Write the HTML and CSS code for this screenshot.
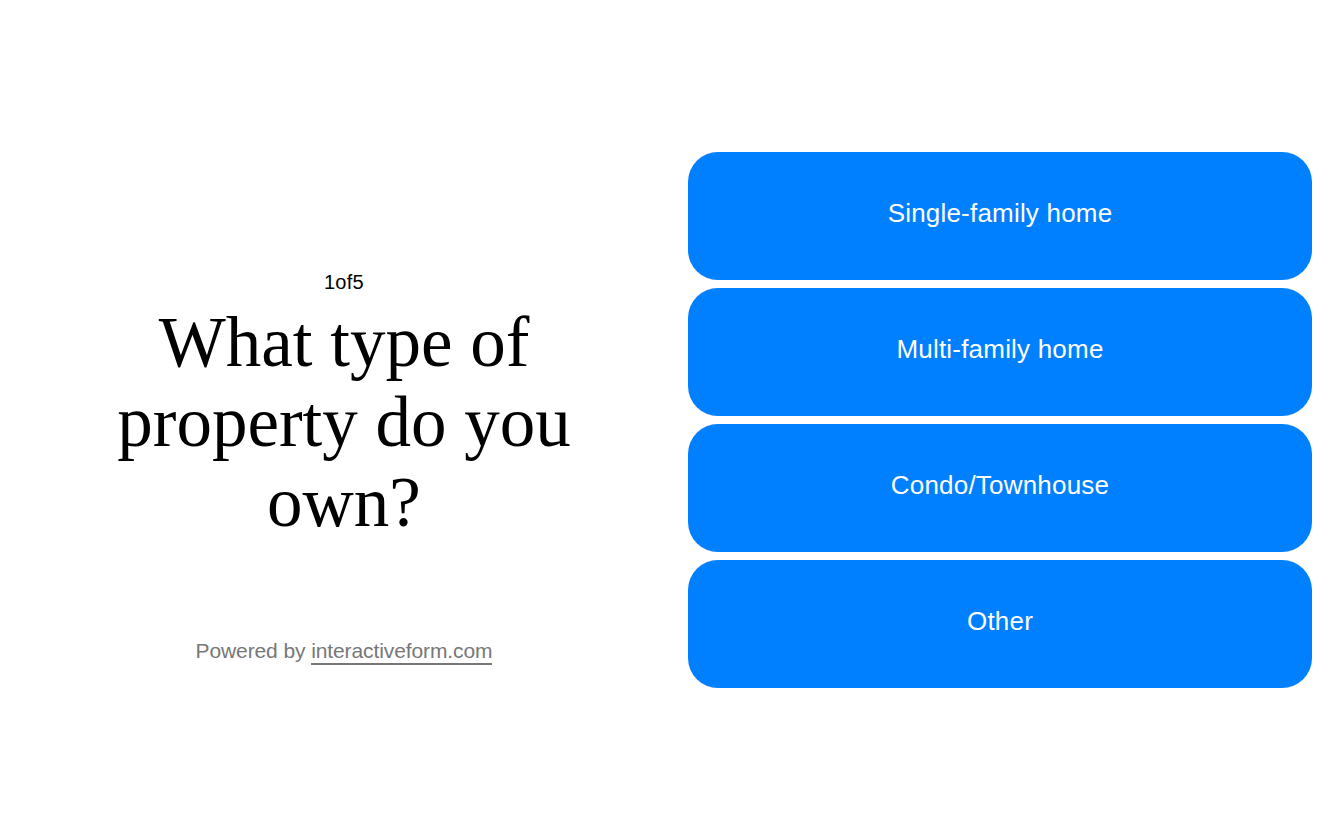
FILE: index.html
```html
<!DOCTYPE html>
<html lang="en">
<head>
    <meta charset="UTF-8">
    <meta name="viewport" content="width=device-width, initial-scale=1.0">
    <title>What type of property do you own?</title>
    <link rel="stylesheet" href="styles.css">
</head>
<body>

    <main class="form-step">
        <section class="question">
            <div class="step-count">1of5</div>
            <h1 class="question-title">What type of property do you own?</h1>
            <p class="powered">Powered by <a href="#">interactiveform.com</a></p>
        </section>

        <section class="answers">
            <button class="answer">Single-family home</button>
            <button class="answer">Multi-family home</button>
            <button class="answer">Condo/Townhouse</button>
            <button class="answer">Other</button>
        </section>
    </main>

</body>
</html>
```

FILE: styles.css
```css
body {
    margin: 0;
    padding: 0;
    background-color: #ffffff;
    font-family: 'Liberation Sans', Arial, sans-serif;
    color: #000;
}

.form-step {
    display: flex;
    align-items: center;
    height: 840px;
}

.question {
    width: 688px;
    display: flex;
    flex-direction: column;
    align-items: center;
    text-align: center;
    padding-top: 92px;
}

.step-count {
    font-size: 20px;
    letter-spacing: 0.3px;
    line-height: 24px;
}

.question-title {
    font-family: 'Liberation Serif', 'Times New Roman', serif;
    font-weight: normal;
    font-size: 71px;
    line-height: 80px;
    max-width: 500px;
    margin: 8px 0 0;
}

.powered {
    margin: 97px 0 0;
    font-size: 21px;
    letter-spacing: -0.1px;
    color: #777;
}

.powered a {
    color: #777;
    text-decoration: none;
    border-bottom: 2px solid #777;
    padding-bottom: 1px;
}

.answers {
    flex-grow: 1;
    display: flex;
    flex-direction: column;
    gap: 8px;
    padding-right: 32px;
}

.answer {
    height: 128px;
    padding-bottom: 6px;
    border: none;
    border-radius: 30px;
    background-color: #0080ff;
    color: white;
    font-family: 'Liberation Sans', Arial, sans-serif;
    font-size: 26px;
    letter-spacing: 0.2px;
    cursor: pointer;
}
```
